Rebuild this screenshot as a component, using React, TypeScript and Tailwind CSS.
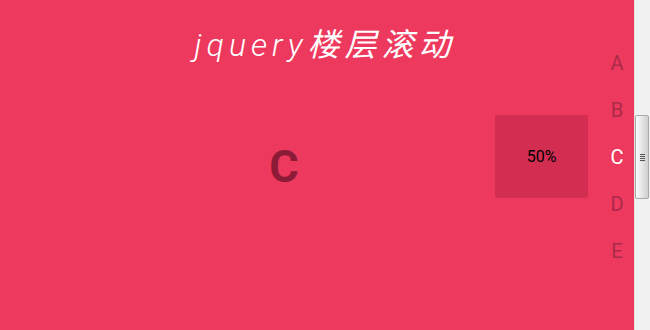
import React from "react";

const floors = ["A", "B", "C", "D", "E"];

const App = () => {
  const active = "C";

  return (
    <div className="flex h-[330px] w-[650px] overflow-hidden font-['Roboto',sans-serif]">
      <main className="flex flex-1 bg-[#ee395e]">
        <div className="flex flex-1 flex-col">
          <h1 className="pl-[50px] pt-[25px] text-center text-[32px] font-light italic leading-[40px] tracking-[5px] text-white font-['Roboto','Noto_Sans_CJK_SC',sans-serif]">
            jquery<span className="font-normal">楼层滚动</span>
          </h1>
          <div className="mt-[50px] flex items-start">
            <div className="flex-1 pl-[73px] text-center">
              <span className="mt-[30px] inline-block text-[45px] font-bold leading-[44px] text-[#8c1b37]">
                C
              </span>
            </div>
            <div className="mr-[12px] flex h-[83px] w-[93px] items-center justify-center rounded-[2px] bg-[#d32e52] text-[16px] text-black">
              50%
            </div>
          </div>
        </div>
        <nav className="flex w-[34px] flex-col pt-[40px]">
          {floors.map((f) => (
            <a
              key={f}
              className={`block h-[47px] text-center text-[20px] leading-[47px] ${
                f === active ? "text-white" : "text-[#ab2949]"
              }`}
            >
              {f}
            </a>
          ))}
        </nav>
      </main>

      {/* fake browser scrollbar */}
      <div className="w-[16px] border-l border-[#e3e3e3] bg-[#f1f1f1]">
        <div className="mt-[115px] flex h-[84px] w-[14px] items-center justify-center rounded-[2px] border border-[#a9a9a9] bg-gradient-to-r from-[#fbfbfb] via-[#e6e6e6] to-[#cfcfcf]">
          <div className="flex flex-col gap-[1px]">
            <div className="h-[1px] w-[5px] bg-[#555]" />
            <div className="h-[1px] w-[5px] bg-[#555]" />
            <div className="h-[1px] w-[5px] bg-[#555]" />
            <div className="h-[1px] w-[5px] bg-[#555]" />
          </div>
        </div>
      </div>
    </div>
  );
};

export default App;
